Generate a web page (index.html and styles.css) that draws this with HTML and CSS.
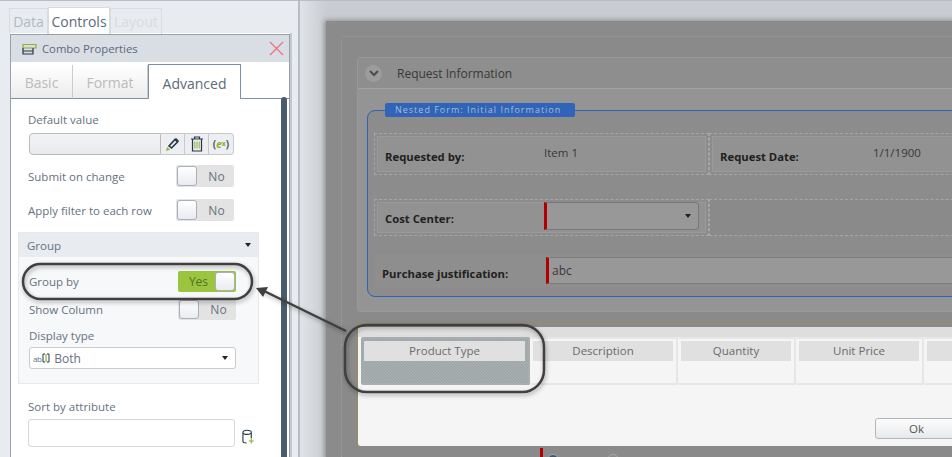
FILE: index.html
```html
<!DOCTYPE html>
<html lang="en">
  <head>
    <meta charset="UTF-8" />
    <title>Combo Properties</title>
    <link rel="stylesheet" href="styles.css">
  </head>
  <body>
    <aside class="sidebar">
      <div class="side-tabs">
        <div class="side-tab">Data</div>
        <div class="side-tab active">Controls</div>
        <div class="side-tab disabled">Layout</div>
      </div>
      <div class="props">
        <div class="props-head">
          <svg class="combo-icon" width="15" height="12" viewBox="0 0 15 12">
            <path d="M1 1.500h13v3.500h-13z" fill="none" stroke="#8eb02e" stroke-width="1.200" />
            <path d="M1 5v6h10v-6M1 8h10" fill="none" stroke="#24384a" stroke-width="1.200" />
          </svg>
          <span class="props-title">Combo Properties</span>
          <svg class="close-icon" width="15" height="15" viewBox="0 0 15 15">
            <path d="M1 1l13 13M14 1l-13 13" stroke="#e8737f" stroke-width="1.200" />
          </svg>
        </div>
        <div class="props-tabs">
          <div class="props-tab basic">Basic</div>
          <div class="props-tab format">Format</div>
          <div class="props-tab active">Advanced</div>
          <div class="props-tab-rest"></div>
        </div>
        <div class="props-body">
          <div class="scrollbar"></div>
          <label class="field-label">Default value</label>
          <div class="value-box">
            <div class="value-input"></div>
            <div class="value-btn">
              <svg width="15" height="15" viewBox="0 0 15 15">
                <path d="M4 9l6-6.500 2.500 2.500-6 6z" fill="none" stroke="#24384a" stroke-width="1.600" />
                <path d="M10.500 1.500l3 3" stroke="#24384a" stroke-width="1.600" />
                <path d="M1 14l1.200-4 2.800 2.800z" fill="#8eb02e" />
              </svg>
            </div>
            <div class="value-btn">
              <svg width="14" height="16" viewBox="0 0 14 16">
                <path d="M4.800 5.500v7M7 5.500v7M9.200 5.500v7" stroke="#8eb02e" stroke-width="1" />
                <path d="M1 3h12M4.500 3v-2h5v2M2.500 3v12h9v-12" fill="none" stroke="#24384a" stroke-width="1.200" />
              </svg>
            </div>
            <div class="value-btn expr"><span class="paren">(</span><i>e</i><sub>x</sub><span class="paren">)</span></div>
          </div>
          <div class="toggle-row first">
            <span class="row-label">Submit on change</span>
            <div class="toggle"><span class="knob"></span><span class="toggle-text">No</span></div>
          </div>
          <div class="toggle-row">
            <span class="row-label">Apply filter to each row</span>
            <div class="toggle"><span class="knob"></span><span class="toggle-text">No</span></div>
          </div>
          <div class="group">
            <div class="group-head">
              <span>Group</span>
              <span class="caret"></span>
            </div>
            <div class="group-body">
              <div class="group-row">
                <span class="row-label">Group by</span>
                <div class="toggle small on"><span class="toggle-text">Yes</span><span class="knob"></span></div>
              </div>
              <div class="group-row second">
                <span class="row-label">Show Column</span>
                <div class="toggle small"><span class="knob"></span><span class="toggle-text">No</span></div>
              </div>
              <label class="field-label display">Display type</label>
              <div class="select">
                <span class="ab">ab</span>
                <svg width="8" height="10" viewBox="0 0 8 10">
                  <path d="M3 1h-2v8h2M5 1h2v8h-2" fill="none" stroke="#24384a" stroke-width="1" />
                  <path d="M4 1v8" stroke="#8eb02e" stroke-width="1.200" />
                </svg>
                <span class="select-text">Both</span>
                <span class="caret"></span>
              </div>
            </div>
          </div>
          <label class="field-label sort">Sort by attribute</label>
          <div class="sort-row">
            <div class="sort-input"></div>
            <svg class="db-icon" width="13" height="15" viewBox="0 0 14 16">
              <path d="M1 3.500c0-3 9-3 9 0v6M1 3.500c0 3 9 3 9 0M1 3.500v10c0 1 1.500 1.500 4 1.500" fill="none" stroke="#24384a" stroke-width="1.200" />
              <path d="M10 10v5.500M7.200 12.800h5.600" stroke="#8eb02e" stroke-width="1.200" />
            </svg>
          </div>
        </div>
      </div>
    </aside>
    <main class="canvas">
      <div class="page">
        <div class="form">
          <section class="section">
            <div class="section-head">
              <span class="chevron">
                <svg width="10" height="7" viewBox="0 0 10 7">
                  <path d="M1 1l4 4 4-4" fill="none" stroke="#4c4c4c" stroke-width="2" />
                </svg>
              </span>
              <span>Request Information</span>
            </div>
            <div class="section-body">
              <fieldset class="nested">
                <legend>Nested Form: Initial Information</legend>
                <div class="form-row">
                  <div class="cell wide">
                    <div class="cell-inner">
                      <span class="cell-label">Requested by:</span>
                      <span class="cell-value">Item 1</span>
                    </div>
                  </div>
                  <div class="cell fill">
                    <div class="cell-inner">
                      <span class="cell-label">Request Date:</span>
                      <span class="cell-value date">1/1/1900</span>
                    </div>
                  </div>
                </div>
                <div class="form-row row-two">
                  <div class="cell wide">
                    <div class="cell-inner">
                      <span class="cell-label">Cost Center:</span>
                      <div class="combo"><span class="caret dark"></span></div>
                    </div>
                  </div>
                  <div class="cell fill blank"></div>
                </div>
                <div class="justify-row">
                  <span class="cell-label">Purchase justification:</span>
                  <div class="justify-input">abc</div>
                </div>
              </fieldset>
            </div>
          </section>
          <div class="dialog-wrap">
            <div class="dialog">
              <div class="grid">
                <div class="col product"><div class="col-head">Product Type</div></div>
                <div class="col desc"><div class="col-head">Description</div></div>
                <div class="col qty"><div class="col-head">Quantity</div></div>
                <div class="col price"><div class="col-head">Unit Price</div></div>
                <div class="col more"><div class="col-head"></div></div>
              </div>
              <div class="dialog-foot"><button class="ok" type="button">Ok</button></div>
            </div>
          </div>
          <div class="after">
            <span class="after-bar"></span>
            <span class="radio first"></span>
            <span class="radio"></span>
          </div>
        </div>
      </div>
    </main>
    <svg class="notes" width="952" height="457" viewBox="0 0 952 457">
      <defs>
        <filter id="soft" x="-10%" y="-20%" width="120%" height="150%">
          <feDropShadow dx="1" dy="2" stdDeviation="2" flood-color="#000" flood-opacity="0.35" />
        </filter>
      </defs>
      <g fill="none" stroke="#3f3f3f" stroke-width="2.500" filter="url(#soft)">
        <rect x="23" y="264" width="229" height="35" rx="17.500" />
        <rect x="345" y="325" width="199" height="67" rx="22" />
        <path d="M346 331l-84-41" />
      </g>
      <path d="M256 288l12-1-5 10z" fill="#3f3f3f" />
    </svg>
  </body>
</html>
```

FILE: styles.css
```css
/* Reset */
* {
  margin: 0;
  padding: 0;
  box-sizing: border-box;
}
html,
body {
  width: 952px;
  height: 457px;
  overflow: hidden;
}
body {
  display: flex;
  font-family: "Open Sans", "Noto Sans", Arial, sans-serif;
  font-size: 11.5px;
  color: #66717f;
  background: #e8ebef;
}
.sidebar {
  width: 300px;
  height: 457px;
  flex: none;
  padding: 6px 9px 0 10px;
  background: #e8ebef;
  border-top: 1px solid #b9bdc3;
  border-right: 2px solid #b9bdc3;
  overflow: hidden;
}
.side-tabs {
  display: flex;
  height: 27px;
  margin-left: -1px;
}
.side-tab {
  width: 39px;
  margin-top: 1px;
  border: 1px solid #d8dbe0;
  border-bottom: none;
  font-size: 14px;
  line-height: 25px;
  text-align: center;
  color: #b4b9c0;
}
.side-tab.active {
  width: 62px;
  margin-top: 0;
  background: #fff;
  color: #5d6a78;
  line-height: 27px;
}
.side-tab.disabled {
  width: 52px;
  color: #d8dbe0;
}
.props {
  width: 280px;
  height: 430px;
  border: 1px solid #98a0aa;
  background: #fff;
  box-shadow: 0 -1px 0 #fff, 2px -1px 0 #c5c9cf;
}
.props-head {
  display: flex;
  align-items: center;
  height: 27px;
  padding: 0 5px 0 11px;
  background: #d9dde4;
}
.combo-icon {
  flex: none;
}
.props-title {
  flex: 1;
  margin-left: 5px;
  font-size: 11.3px;
  color: #5d6a78;
}
.props-tabs {
  display: flex;
  height: 37px;
}
.props-tab {
  margin-top: 3px;
  background: linear-gradient(#fff, #ececec);
  border-right: 1px solid #ccc;
  border-bottom: 1px solid #7d8fa5;
  font-size: 14px;
  line-height: 36px;
  text-align: center;
  color: #bbb;
}
.props-tab.basic {
  width: 62px;
}
.props-tab.format {
  width: 75px;
}
.props-tab.active {
  width: 93px;
  margin-top: 2px;
  background: #fff;
  border: 1px solid #7d8fa5;
  border-bottom: none;
  line-height: 38px;
  color: #5d6a78;
}
.props-tab-rest {
  flex: 1;
  border-bottom: 1px solid #7d8fa5;
}
.props-body {
  position: relative;
  height: 365px;
  padding: 13px 0 0 17px;
}
.scrollbar {
  position: absolute;
  top: -2px;
  right: 2px;
  width: 6px;
  height: 370px;
  background: #4a5c6c;
  border-radius: 3px 3px 0 0;
}
.field-label {
  display: block;
  line-height: 16px;
}
.value-box {
  display: flex;
  width: 205px;
  height: 22px;
  margin: 5px 0 0 1px;
}
.value-input {
  flex: 1;
  background: linear-gradient(#f2f3f5, #e8eaee);
  border: 1px solid #bbb;
  border-radius: 4px 0 0 4px;
}
.value-btn {
  display: flex;
  align-items: center;
  justify-content: center;
  width: 24px;
  background: #eceef1;
  border: 1px solid #c6c9cd;
  border-left: none;
}
.value-btn.expr {
  width: 25px;
  border-radius: 0 4px 4px 0;
  font-size: 10px;
  font-weight: 700;
  color: #8eb02e;
}
.expr .paren {
  color: #4c5a68;
}
.expr sub {
  font-size: 7px;
  line-height: 0;
}
.toggle-row {
  display: flex;
  align-items: center;
  justify-content: space-between;
  width: 206px;
  height: 22px;
  margin-top: 12px;
}
.toggle-row.first {
  margin-top: 10px;
}
.toggle {
  display: flex;
  align-items: center;
  justify-content: space-between;
  width: 58px;
  height: 22px;
  padding: 1px;
  background: #e3e3e3;
  border-radius: 2px;
  font-size: 12px;
}
.toggle.small {
  height: 21px;
}
.knob {
  width: 20px;
  height: 100%;
  background: linear-gradient(#fff, #e8ebf1);
  border: 1px solid #aab0b8;
  border-radius: 3px;
}
.toggle-text {
  flex: 1;
  padding-left: 3px;
  text-align: center;
}
.toggle.on {
  background: #9cc53f;
  color: #55702a;
}
.group {
  width: 241px;
  height: 152px;
  margin: 11px 0 0 -10px;
  background: #f7f8f9;
  border: 1px solid #e6e8eb;
}
.group-head {
  display: flex;
  align-items: center;
  justify-content: space-between;
  height: 24px;
  padding: 0 7px 0 8px;
  background: #e8ebef;
}
.caret {
  width: 0;
  height: 0;
  border: 3px solid transparent;
  border-top: 4px solid #222;
  border-bottom: none;
}
.group-body {
  padding: 14px 22px 0 10px;
}
.group-row {
  display: flex;
  align-items: center;
  justify-content: space-between;
  height: 21px;
}
.group-row.second {
  margin-top: 7px;
}
.field-label.display {
  margin-top: 8px;
}
.select {
  display: flex;
  align-items: center;
  height: 22px;
  margin-top: 3px;
  padding: 0 7px 0 3px;
  background: #fff;
  border: 1px solid #c9cbce;
  border-radius: 3px;
}
.ab {
  font-size: 8px;
  letter-spacing: -0.5px;
  margin-right: 1px;
}
.select-text {
  flex: 1;
  margin-left: 4px;
  font-size: 12px;
}
.field-label.sort {
  margin-top: 15px;
}
.sort-row {
  display: flex;
  align-items: flex-end;
  gap: 7px;
  margin-top: 4px;
}
.sort-input {
  width: 207px;
  height: 28px;
  background: #fff;
  border: 1px solid #d5d8dc;
  border-radius: 3px;
}
.db-icon {
  margin-bottom: 3px;
}
.canvas {
  flex: 1;
  height: 457px;
  padding: 20px 0 0 26px;
  background: linear-gradient(90deg, #e0e3e7, #c9cdd2 26px);
  border-top: 1px solid #b9bdc3;
  overflow: hidden;
}
.page {
  width: 640px;
  height: 440px;
  padding: 15px 0 0 15px;
  background: #8b8b8b;
  box-shadow: -2px -1px 5px rgba(0, 0, 0, 0.3);
}
.form {
  width: 640px;
  height: 430px;
  padding: 20px 0 0 15px;
  background: #8a8a8a;
  border: 1px dotted #9e9e9e;
  border-radius: 3px 0 0 0;
}
.section {
  width: 620px;
  height: 255px;
  background: #949494;
  border: 1px solid #999;
  border-radius: 3px;
  color: #383838;
}
.section-head {
  display: flex;
  align-items: center;
  gap: 15px;
  height: 31px;
  padding-left: 7px;
  background: #8e8e8e;
  border-bottom: 1px solid #a2a2a2;
  font-size: 12px;
}
.chevron {
  display: flex;
  align-items: center;
  justify-content: center;
  width: 17px;
  height: 17px;
  background: #9c9c9c;
  border-radius: 50%;
}
.section-body {
  padding: 14px 0 0 9px;
}
.nested {
  width: 620px;
  height: 194px;
  padding: 16px 0 0 6px;
  background: #8c8c8c;
  border: 1px solid #2e62b5;
  border-radius: 8px;
}
.nested legend {
  width: 190px;
  height: 14px;
  margin-left: 11px;
  padding-left: 10px;
  background: #2f64b8;
  border-radius: 2px;
  font-size: 9px;
  line-height: 14px;
  letter-spacing: 1px;
  color: #a9bcd6;
}
.form-row {
  display: flex;
  height: 42px;
}
.form-row.row-two {
  height: 37px;
  margin-top: 24px;
}
.cell {
  flex: none;
  padding: 2px;
  border: 1px dashed #a6a6a6;
}
.cell.wide {
  width: 335px;
}
.cell.fill {
  width: 280px;
}
.cell.blank {
  background: #8a8a8a;
}
.cell-inner {
  display: flex;
  height: 100%;
  background: #929292;
  border: 1px solid #9a9a9a;
}
.cell-label {
  width: 166px;
  padding: 12px 0 0 7px;
  font-weight: 700;
  font-size: 11.3px;
  color: #1f1f1f;
}
.row-two .cell-label {
  padding-top: 8px;
}
.cell-value {
  padding-top: 8px;
}
.cell-value.date {
  margin-left: -6px;
}
.combo {
  display: flex;
  align-items: center;
  justify-content: flex-end;
  width: 155px;
  height: 28px;
  margin-top: -1px;
  padding-right: 7px;
  background: #989898;
  border: 1px solid #777;
  border-left: 3px solid #b00000;
  border-radius: 0 4px 4px 0;
}
.caret.dark {
  border-top-color: #1f1f1f;
}
.justify-row {
  display: flex;
  width: 612px;
  height: 34px;
  margin: 18px 0 0 1px;
  padding-top: 3px;
  background: #8e8e8e;
}
.justify-row .cell-label {
  width: 171px;
  padding-top: 9px;
}
.justify-input {
  flex: 1;
  height: 27px;
  padding: 4px 0 0 3px;
  background: #989898;
  border: 1px solid #7c7c7c;
  border-left: 3px solid #b00000;
  font-size: 12px;
}
.dialog-wrap {
  width: 620px;
  height: 123px;
  margin-top: 11px;
  padding-top: 3px;
  border-top: 1px dotted #a58f32;
  border-left: 1px dotted #a58f32;
}
.dialog {
  height: 119px;
  padding-top: 10px;
  background: #f5f5f5;
  border-radius: 0 0 3px 3px;
  box-shadow: inset 0 10px 0 #dedede;
}
.grid {
  display: flex;
  height: 48px;
  margin-left: 3px;
  color: #6a6a6a;
}
.col {
  flex: none;
  padding: 2px 3px 0;
  border: 2px solid #e6e6e6;
  border-left: none;
  border-radius: 2px;
}
.col-head {
  height: 20px;
  background: #e0e0e0;
  line-height: 20px;
  text-align: center;
}
.col.product {
  width: 169px;
  background: repeating-linear-gradient(45deg, #a6aeb0 0, #a6aeb0 1.06px, #99a2a5 1.06px, #99a2a5 2.12px);
  border-color: #a8aeb0;
}
.col.desc {
  width: 148px;
}
.col.qty {
  width: 118px;
}
.col.price {
  width: 128px;
}
.col.more {
  width: 60px;
  border-right: none;
}
.dialog-foot {
  display: flex;
  justify-content: flex-end;
  padding-top: 33px;
}
.ok {
  width: 83px;
  height: 21px;
  margin-right: 19px;
  background: linear-gradient(#fdfdfd, #e6e9ec);
  border: 1px solid #b5b5b5;
  border-radius: 3px;
  font-family: inherit;
  font-size: 11.5px;
  color: #555;
}
.after {
  position: relative;
  height: 12px;
  margin-top: 2px;
}
.after-bar {
  position: absolute;
  left: 183px;
  top: 0;
  width: 3px;
  height: 12px;
  background: #b00000;
}
.radio {
  position: absolute;
  left: 250px;
  top: 6px;
  width: 12px;
  height: 12px;
  background: #8a8a8a;
  border: 1px solid #a8a8a8;
  border-radius: 50%;
}
.radio.first {
  left: 190px;
  background: #40566c;
}
.notes {
  position: absolute;
  left: 0;
  top: 0;
}
```
